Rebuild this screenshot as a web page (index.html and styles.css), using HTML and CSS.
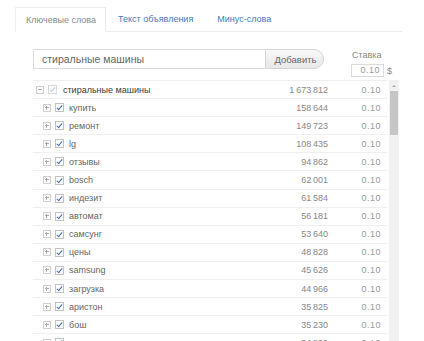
FILE: index.html
```html
<!DOCTYPE html>
<html lang="ru">
<head>
    <meta charset="UTF-8">
    <meta name="viewport" content="width=device-width, initial-scale=1.0">
    <title>Ключевые слова</title>
    <link rel="stylesheet" href="styles.css">
</head>
<body>

    <div class="panel">
        <ul class="tabs">
            <li class="tab active">Ключевые слова</li>
            <li class="tab">Текст объявления</li>
            <li class="tab">Минус-слова</li>
        </ul>

        <div class="add-row">
            <div class="search">
                <input class="search-input" type="text" value="стиральные машины">
                <button class="add-btn">Добавить</button>
            </div>
            <div class="bid">
                <div class="bid-label">Ставка</div>
                <div class="bid-field">
                    <span class="bid-input">0.10</span>
                    <span class="currency">$</span>
                </div>
            </div>
        </div>

        <!-- Список фраз -->
        <div class="list">
            <div class="rows">
                <div class="row root">
                    <span class="toggle minus"></span>
                    <span class="check faded"></span>
                    <span class="phrase">стиральные машины</span>
                    <span class="shows">1&#8201;673&#8201;812</span>
                    <span class="price">0.10</span>
                </div>
                <div class="row"><span class="toggle"></span><span class="check"></span><span class="phrase">купить</span><span class="shows">158&#8201;644</span><span class="price">0.10</span></div>
                <div class="row"><span class="toggle"></span><span class="check"></span><span class="phrase">ремонт</span><span class="shows">149&#8201;723</span><span class="price">0.10</span></div>
                <div class="row"><span class="toggle"></span><span class="check"></span><span class="phrase">lg</span><span class="shows">108&#8201;435</span><span class="price">0.10</span></div>
                <div class="row"><span class="toggle"></span><span class="check"></span><span class="phrase">отзывы</span><span class="shows">94&#8201;862</span><span class="price">0.10</span></div>
                <div class="row"><span class="toggle"></span><span class="check"></span><span class="phrase">bosch</span><span class="shows">62&#8201;001</span><span class="price">0.10</span></div>
                <div class="row"><span class="toggle"></span><span class="check"></span><span class="phrase">индезит</span><span class="shows">61&#8201;584</span><span class="price">0.10</span></div>
                <div class="row"><span class="toggle"></span><span class="check"></span><span class="phrase">автомат</span><span class="shows">56&#8201;181</span><span class="price">0.10</span></div>
                <div class="row"><span class="toggle"></span><span class="check"></span><span class="phrase">самсунг</span><span class="shows">53&#8201;640</span><span class="price">0.10</span></div>
                <div class="row"><span class="toggle"></span><span class="check"></span><span class="phrase">цены</span><span class="shows">48&#8201;828</span><span class="price">0.10</span></div>
                <div class="row"><span class="toggle"></span><span class="check"></span><span class="phrase">samsung</span><span class="shows">45&#8201;626</span><span class="price">0.10</span></div>
                <div class="row"><span class="toggle"></span><span class="check"></span><span class="phrase">загрузка</span><span class="shows">44&#8201;966</span><span class="price">0.10</span></div>
                <div class="row"><span class="toggle"></span><span class="check"></span><span class="phrase">аристон</span><span class="shows">35&#8201;825</span><span class="price">0.10</span></div>
                <div class="row"><span class="toggle"></span><span class="check"></span><span class="phrase">бош</span><span class="shows">35&#8201;230</span><span class="price">0.10</span></div>
                <div class="row"><span class="toggle"></span><span class="check"></span><span class="phrase">вертикальная</span><span class="shows">34&#8201;839</span><span class="price">0.10</span></div>
            </div>
            <div class="scrollbar">
                <span class="arrow-up"></span>
                <span class="thumb"></span>
            </div>
        </div>
    </div>

</body>
</html>
```

FILE: styles.css
```css
body {
    margin: 0;
    background: #fff;
    font-family: "Liberation Sans", Arial, sans-serif;
    font-size: 9px;
    color: #666;
}

.panel {
    width: 387px;
    padding: 7px 0 0 15px;
}

/* Вкладки */
.tabs {
    display: flex;
    margin: 0;
    padding: 0;
    list-style: none;
    height: 25px;
}

.tab {
    padding: 0 12px;
    line-height: 24px;
    color: #4677c0;
    border-bottom: 1px solid #ececec;
}

.tab.active {
    padding: 0 9px 0 10px;
    color: #8a8a8a;
    border: 1px solid #ececec;
    border-bottom-color: #fff;
}

.tabs::after {
    content: "";
    flex: 1;
    border-bottom: 1px solid #ececec;
}

/* Поле добавления */
.add-row {
    display: flex;
    align-items: flex-start;
    margin-top: 17px;
    padding-left: 18px;
}

.search {
    display: flex;
    height: 20px;
}

.search-input {
    box-sizing: border-box;
    width: 232px;
    height: 20px;
    margin: 0;
    padding: 0 8px;
    border: 1px solid #dadada;
    border-right: none;
    font-family: inherit;
    font-size: 10.5px;
    color: #666;
    outline: none;
}

.add-btn {
    box-sizing: border-box;
    width: 59px;
    height: 20px;
    margin: 0;
    padding: 0 0 0 2px;
    border: 1px solid #d4d4d4;
    border-radius: 0 10px 10px 0;
    background: linear-gradient(#f8f8f8, #e8e8e8);
    font-family: inherit;
    font-size: 9.5px;
    color: #666;
}

.bid {
    margin-left: 27px;
}

.bid-label {
    color: #888;
    line-height: 10px;
    padding: 1px 0 0 1px;
}

.bid-field {
    display: flex;
    align-items: center;
    margin-top: 4px;
}

.bid-input {
    box-sizing: border-box;
    width: 33px;
    height: 13px;
    padding-right: 3px;
    border: 1px solid #dadada;
    text-align: right;
    line-height: 11px;
    color: #999;
    letter-spacing: 0.5px;
}

.currency {
    margin-left: 3px;
    color: #888;
}

/* Список фраз */
.list {
    display: flex;
    gap: 2px;
    margin-top: 3px;
    margin-left: 18px;
}

.rows {
    width: 354px;
    border-top: 1px solid #efefef;
}

.row {
    box-sizing: border-box;
    display: flex;
    align-items: center;
    height: 18.1px;
    padding-left: 10px;
    border-bottom: 1px solid #f0f0f0;
    white-space: nowrap;
}

.row.root {
    padding-left: 3px;
}

.toggle {
    box-sizing: border-box;
    position: relative;
    width: 8px;
    height: 8px;
    border: 1px solid #cfcfcf;
    flex-shrink: 0;
}

.toggle::before,
.toggle::after {
    content: "";
    position: absolute;
    background: #aaa;
}

.toggle::before {
    left: 1px;
    top: 2px;
    width: 4px;
    height: 1px;
}

.toggle::after {
    left: 2px;
    top: 1px;
    width: 1px;
    height: 4px;
}

.toggle.minus::after {
    display: none;
}

.check {
    box-sizing: border-box;
    position: relative;
    width: 9px;
    height: 9px;
    margin-left: 4px;
    border: 1px solid #c2c2c2;
    background: #fff;
    flex-shrink: 0;
}

.check::after {
    content: "";
    position: absolute;
    left: 2px;
    top: 0;
    width: 2px;
    height: 5px;
    border: solid #3f6fba;
    border-width: 0 1.5px 1.5px 0;
    transform: rotate(40deg);
}

.check.faded {
    border-color: #d8d8d8;
}

.check.faded::after {
    border-color: #bfcbe0;
}

.phrase {
    flex: 1;
    margin-left: 5px;
}

.root .phrase {
    margin-left: 6px;
    color: #3a3a3a;
}

.shows {
    color: #888;
}

.price {
    width: 59px;
    padding-right: 6px;
    box-sizing: border-box;
    text-align: right;
    color: #999;
    letter-spacing: 0.5px;
}

/* Полоса прокрутки */
.scrollbar {
    position: relative;
    width: 10px;
    height: 300px;
    background: #f1f1f1;
}

.arrow-up {
    position: absolute;
    left: 3px;
    top: 5px;
    border-left: 2px solid transparent;
    border-right: 2px solid transparent;
    border-bottom: 2px solid #a8a8a8;
}

.thumb {
    position: absolute;
    left: 1px;
    top: 11px;
    width: 8px;
    height: 44px;
    background: #c6c6c6;
}
```
